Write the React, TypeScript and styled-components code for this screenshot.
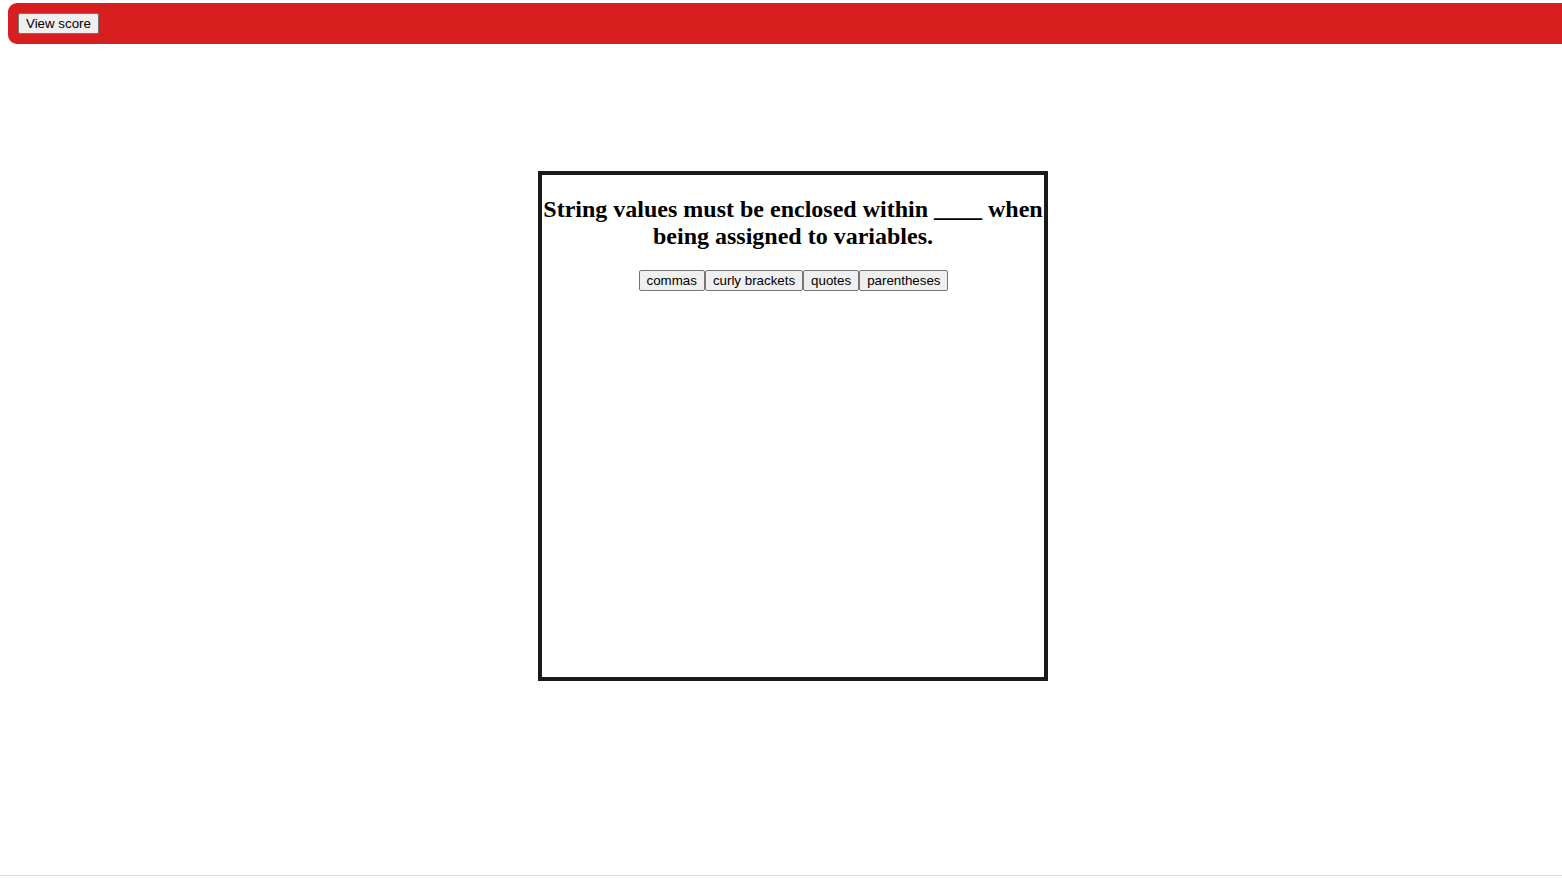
import React from "react";
import styled, { createGlobalStyle } from "styled-components";

const Global = createGlobalStyle`
  html, body { margin: 0; padding: 0; background: #fff; overflow: hidden; }
  body { font-family: "Liberation Serif", "Times New Roman", serif; }
`;

const Page = styled.div`
  min-height: 100vh;
  display: flex;
  flex-direction: column;
`;

const Header = styled.header`
  margin: 3px 0 0 8px;
  width: calc(100vw + 20px);
  box-sizing: border-box;
  height: 41px;
  padding: 10px;
  background: #d71f1f;
  border-radius: 9px;
  display: flex;
  align-items: flex-start;
`;

const Button = styled.button`
  font-family: "Liberation Sans", Arial, sans-serif;
  font-size: 13.33px;
  line-height: 15px;
  height: 21px;
  padding: 1px 7px;
  margin: 0;
  color: #000;
  background: #efefef;
  border: 1px solid #767676;
  border-radius: 2px;
  cursor: pointer;
`;

const Main = styled.main`
  flex: 1;
  display: flex;
  justify-content: flex-start;
  padding-top: 127px;
  padding-left: 538px;
`;

const Card = styled.section`
  width: 510px;
  height: 510px;
  box-sizing: border-box;
  border: 4px solid #1b1a1a;
  display: flex;
  flex-direction: column;
  align-items: center;
`;

const Question = styled.h2`
  margin: 21px 0 20px;
  font-family: "Liberation Serif", "Times New Roman", serif;
  font-size: 24px;
  line-height: 27px;
  font-weight: bold;
  text-align: center;
  color: #000;
`;

const Choices = styled.div`
  display: flex;
  gap: 0;
  padding-left: 1px;
`;

const Footer = styled.div`
  height: 1px;
  background: #dcdcdc;
  margin-bottom: 3px;
`;

const answers = ["commas", "curly brackets", "quotes", "parentheses"];

export default function App() {
  return (
    <Page>
      <Global />
      <Header>
        <Button>View score</Button>
      </Header>
      <Main>
        <Card>
          <Question>
            String values must be enclosed within ____ when being assigned to variables.
          </Question>
          <Choices>
            {answers.map((a) => (
              <Button key={a}>{a}</Button>
            ))}
          </Choices>
        </Card>
      </Main>
      <Footer />
    </Page>
  );
}
